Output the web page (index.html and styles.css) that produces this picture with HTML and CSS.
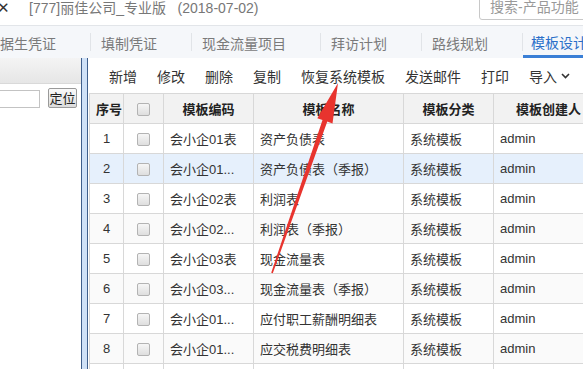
FILE: index.html
```html
<!DOCTYPE html>
<html lang="zh-CN">
<head>
    <meta charset="UTF-8">
    <title>模板设计</title>
    <link rel="stylesheet" href="styles.css">
</head>
<body>
    <div class="topbar">
        <span class="close">✕</span>
        <span class="title">[777]丽佳公司_专业版&nbsp;&nbsp;&nbsp;(2018-07-02)</span>
        <div class="search">搜索-产品功能</div>
    </div>

    <div class="tabs">
        <div class="tab first">单据生凭证</div>
        <div class="tab">填制凭证</div>
        <div class="tab">现金流量项目</div>
        <div class="tab">拜访计划</div>
        <div class="tab">路线规划</div>
        <div class="tab active">模板设计</div>
    </div>

    <div class="main">
        <div class="left">
            <div class="left-head"></div>
            <div class="locate">
                <input type="text" class="locate-input">
                <button class="locate-btn">定位</button>
            </div>
        </div>

        <div class="splitter"></div>

        <div class="right">
            <div class="toolbar">
                <span class="tool">新增</span>
                <span class="tool">修改</span>
                <span class="tool">删除</span>
                <span class="tool">复制</span>
                <span class="tool">恢复系统模板</span>
                <span class="tool">发送邮件</span>
                <span class="tool">打印</span>
                <span class="tool">导入 <svg class="chev" width="9" height="6" viewBox="0 0 9 6"><path d="M1 1 L4.5 4.5 L8 1" fill="none" stroke="#333" stroke-width="1.6"/></svg></span>
            </div>

            <table class="grid">
                <colgroup>
                    <col style="width:34px">
                    <col style="width:40px">
                    <col style="width:90px">
                    <col style="width:150px">
                    <col style="width:90px">
                    <col style="width:110px">
                </colgroup>
                <thead>
                    <tr>
                        <th>序号</th>
                        <th><span class="check"></span></th>
                        <th>模板编码</th>
                        <th>模板名称</th>
                        <th>模板分类</th>
                        <th>模板创建人</th>
                    </tr>
                </thead>
                <tbody>
                    <tr><td class="num">1</td><td class="c"><span class="check"></span></td><td>会小企01表</td><td>资产负债表</td><td>系统模板</td><td>admin</td></tr>
                    <tr class="hover"><td class="num">2</td><td class="c"><span class="check"></span></td><td>会小企01...</td><td>资产负债表<span class="fw">（</span>季报<span class="fw">）</span></td><td>系统模板</td><td>admin</td></tr>
                    <tr><td class="num">3</td><td class="c"><span class="check"></span></td><td>会小企02表</td><td>利润表</td><td>系统模板</td><td>admin</td></tr>
                    <tr class="even"><td class="num">4</td><td class="c"><span class="check"></span></td><td>会小企02...</td><td>利润表<span class="fw">（</span>季报<span class="fw">）</span></td><td>系统模板</td><td>admin</td></tr>
                    <tr><td class="num">5</td><td class="c"><span class="check"></span></td><td>会小企03表</td><td>现金流量表</td><td>系统模板</td><td>admin</td></tr>
                    <tr class="even"><td class="num">6</td><td class="c"><span class="check"></span></td><td>会小企03...</td><td>现金流量表<span class="fw">（</span>季报<span class="fw">）</span></td><td>系统模板</td><td>admin</td></tr>
                    <tr><td class="num">7</td><td class="c"><span class="check"></span></td><td>会小企01...</td><td>应付职工薪酬明细表</td><td>系统模板</td><td>admin</td></tr>
                    <tr class="even"><td class="num">8</td><td class="c"><span class="check"></span></td><td>会小企01...</td><td>应交税费明细表</td><td>系统模板</td><td>admin</td></tr>
                    <tr><td class="num">9</td><td class="c"><span class="check"></span></td><td>会小企04表</td><td>增值税明细表</td><td>系统模板</td><td>admin</td></tr>
                </tbody>
            </table>
        </div>
    </div>

    <!-- annotation arrow drawn over the screenshot -->
    <svg class="arrow" width="583" height="369" viewBox="0 0 583 369">
        <polygon fill="#e8342e" points="338,83 332.5,123.4 327.3,121.6 272.8,273.3 271.2,272.7 322.5,120 317.3,118.2"/>
    </svg>
</body>
</html>
```

FILE: styles.css
```css
body {
    margin: 0;
    width: 583px;
    height: 369px;
    overflow: hidden;
    position: relative;
    font-family: "Liberation Sans", "Noto Sans CJK SC", sans-serif;
    color: #333;
    background-color: #fff;
}

.topbar {
    height: 26px;
    display: flex;
    align-items: flex-start;
    border-bottom: 1px solid #e2e5e9;
    box-sizing: border-box;
}

.close {
    font-size: 15px;
    line-height: 15px;
    color: #333;
    margin-left: -3px;
    width: 32px;
}

.title {
    font-size: 14px;
    line-height: 16px;
    color: #777;
}

.search {
    margin-left: auto;
    margin-top: -6px;
    width: 110px;
    height: 26px;
    box-sizing: border-box;
    border: 1px solid #c8c8c8;
    border-radius: 3px;
    padding: 4px 0 0 10px;
    font-size: 14px;
    line-height: 16px;
    color: #999;
    margin-right: -6px;
}

.tabs {
    height: 32px;
    display: flex;
    align-items: stretch;
    background-color: #f5f7fa;
    margin-left: -14px;
    white-space: nowrap;
}

.tab {
    font-size: 14px;
    line-height: 28px;
    padding: 4px 35px 0 10px;
    color: #7a7a7a;
    position: relative;
}

.tab::after {
    content: "";
    position: absolute;
    right: 0;
    top: 7px;
    bottom: 7px;
    width: 1px;
    background-color: #e1e4e8;
}

.tab.first {
    padding-left: 0;
}

.tab.active {
    color: #2a6fc9;
    padding-left: 8px;
    padding-top: 5px;
    line-height: 24px;
    border-bottom: 3px solid #3a7fd6;
}

.tab.active::after {
    display: none;
}

.main {
    display: flex;
    height: 311px;
}

.left {
    width: 81px;
    flex-shrink: 0;
    overflow: hidden;
}

.left-head {
    height: 25px;
    background: linear-gradient(#f4f4f4, #e6e6e6);
    border-bottom: 1px solid #d9d9d9;
}

.locate {
    display: flex;
    align-items: center;
    padding-top: 4px;
}

.locate-input {
    margin: 1px 0 0 -20px;
    width: 60px;
    height: 18px;
    box-sizing: border-box;
    border: 1px solid #c3c3c3;
    padding: 0;
}

.locate-btn {
    margin-left: 8px;
    width: 29px;
    height: 20px;
    padding: 0;
    font-family: "Noto Sans CJK SC", sans-serif;
    font-size: 13px;
    line-height: 16px;
    color: #222;
    border: 1px solid #9a9a9a;
    border-radius: 2px;
    background: linear-gradient(#fafafa, #dcdcdc);
}

.splitter {
    width: 5px;
    flex-shrink: 0;
    background-color: #cfe1f7;
    border-left: 1px solid #3f5f8c;
    border-right: 1px solid #3f5f8c;
}

.right {
    flex: 1;
    padding-left: 1px;
    overflow: hidden;
}

.toolbar {
    height: 35px;
    display: flex;
    align-items: center;
    gap: 20px;
    padding-left: 20px;
    white-space: nowrap;
}

.tool {
    font-size: 14px;
    color: #333;
    display: flex;
    align-items: center;
}

.chev {
    margin-left: 4px;
}

.grid {
    border-collapse: collapse;
    table-layout: fixed;
    width: 514px;
    font-size: 13px;
    white-space: nowrap;
}

.grid th,
.grid td {
    border: 1px solid #d8d8d8;
    height: 29px;
    padding: 0 6px;
    overflow: hidden;
}

.grid th {
    background-color: #f2f2f2;
    font-weight: bold;
    color: #222;
    text-align: center;
}

.grid td {
    color: #333;
}

.grid .num,
.grid .c {
    text-align: center;
    padding: 0;
}

.grid tr.even td {
    background-color: #fafafa;
}

.grid tr.hover td {
    background-color: #e6f0fc;
}

.fw {
    display: inline-block;
    width: 1em;
    text-align: center;
}

.check {
    display: inline-block;
    width: 11px;
    height: 11px;
    border: 1px solid #b3b3b3;
    border-radius: 2px;
    background: linear-gradient(#f6f6f6, #dedede);
    vertical-align: middle;
}

.arrow {
    position: absolute;
    left: 0;
    top: 0;
    pointer-events: none;
}
```
